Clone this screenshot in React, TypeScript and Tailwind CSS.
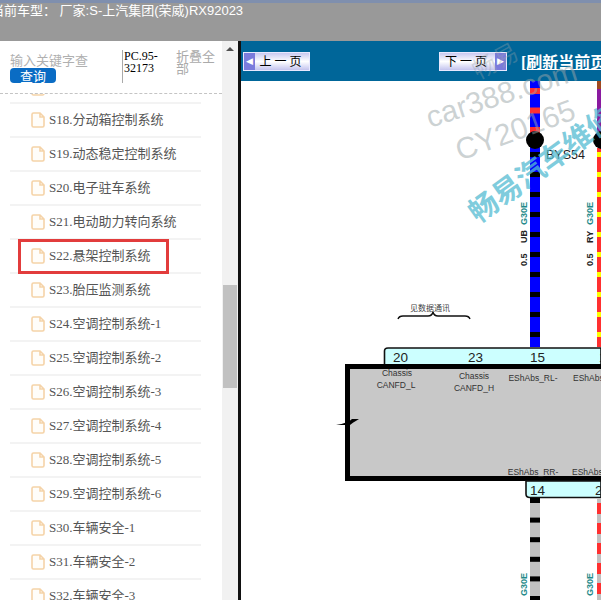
import React from "react";

const rows = [
  "S17.分动箱控制系统",
  "S18.分动箱控制系统",
  "S19.动态稳定控制系统",
  "S20.电子驻车系统",
  "S21.电动助力转向系统",
  "S22.悬架控制系统",
  "S23.胎压监测系统",
  "S24.空调控制系统-1",
  "S25.空调控制系统-2",
  "S26.空调控制系统-3",
  "S27.空调控制系统-4",
  "S28.空调控制系统-5",
  "S29.空调控制系统-6",
  "S30.车辆安全-1",
  "S31.车辆安全-2",
  "S32.车辆安全-3",
];

const CJK = "font-['Liberation_Serif','Noto_Sans_CJK_SC',serif]";

function FileIcon({ shifted }: { shifted?: boolean }) {
  return (
    <svg width="14" height="16" viewBox="0 0 14 16" className={shifted ? "shrink-0 translate-y-[2px]" : "shrink-0"}>
      <path d="M1 2.5 Q1 1 2.5 1 H9 L13 5 V13.5 Q13 15 11.5 15 H2.5 Q1 15 1 13.5 Z M9 1 V5 H13" fill="#fffdf9" stroke="#f5d3a8" strokeWidth="1.6" />
    </svg>
  );
}

function PageButton({ label, dir }: { label: string; dir: "prev" | "next" }) {
  const arrow = (
    <span className="w-[11px] h-full bg-[#7b7bdc] flex items-center justify-center text-white text-[9px] leading-none font-['Liberation_Sans',sans-serif]">
      {dir === "prev" ? "◀" : "▶"}
    </span>
  );
  return (
    <div className="h-[19px] flex items-stretch border border-[#e8e8ff] bg-gradient-to-b from-[#c9c9f0] via-[#ffffff] to-[#c4c4ee] overflow-hidden">
      {dir === "prev" && arrow}
      <span className={`flex-1 flex items-center justify-center text-[12px] text-black tracking-[3px] ${CJK}`}>{label}</span>
      {dir === "next" && arrow}
    </div>
  );
}

function bands(x: number, w: number, y0: number, y1: number, step: number, h: number, color: string) {
  const out: React.ReactNode[] = [];
  for (let y = y0; y < y1; y += step) {
    out.push(<rect key={`${x}-${y}`} x={x} y={y} width={w} height={Math.min(h, y1 - y)} fill={color} />);
  }
  return out;
}

function VLabel({ x, y, text, color, size = 9 }: { x: number; y: number; text: string; color: string; size?: number }) {
  return (
    <text transform={`translate(${x} ${y}) rotate(-90)`} fontFamily="Liberation Sans, sans-serif" fontWeight="700" fontSize={size} fill={color}>
      {text}
    </text>
  );
}

function Diagram() {
  const sans = "Liberation Sans, sans-serif";
  return (
    <svg viewBox="241 81 360 519" width="360" height="519" className="block bg-white overflow-visible">
      {/* top wires */}
      <rect x="530" y="81" width="10" height="266" fill="#0000ff" />
      {bands(530, 10, 88, 135, 19.5, 6, "#ff3030")}
      {bands(530, 10, 152, 347, 20, 5, "#000000")}
      <rect x="597" y="81" width="4" height="60" fill="#8a1aa0" />
      <rect x="597" y="81" width="4" height="8" fill="#a04a20" />
      <rect x="597" y="148" width="4" height="199" fill="#ff3030" />
      {bands(597, 4, 152, 347, 20, 5, "#ffff00")}
      <circle cx="535" cy="140" r="9" fill="#000" />
      <circle cx="602" cy="140" r="9" fill="#000" />
      <text x="546" y="159" fontFamily={sans} fontSize="12.5" fill="#222">BYS54</text>

      <VLabel x={527} y={225} text="G30E" color="#1f8a8a" />
      <VLabel x={527} y={243} text="UB" color="#222" />
      <VLabel x={527} y={266} text="0.5" color="#222" />
      <VLabel x={593} y={225} text="G30E" color="#1f8a8a" />
      <VLabel x={593} y={243} text="RY" color="#222" />
      <VLabel x={593} y={266} text="0.5" color="#222" />

      {/* brace */}
      <text x="410" y="311" fontFamily="Noto Sans CJK SC, sans-serif" fontSize="8" fill="#444">见数据通讯</text>
      <path d="M398 319 Q399 316 403 316 H428 Q432 316 433 312 Q434 316 438 316 H465 Q469 316 470 319" fill="none" stroke="#111" strokeWidth="1.4" />

      {/* connector top */}
      <path d="M384.5 366 V351 Q384.5 348 388 348 H601 V366 Z" fill="#ccffff" stroke="#111" strokeWidth="1.6" />
      <g fontFamily={sans} fontSize="13.5" fill="#222">
        <text x="393" y="362">20</text>
        <text x="468" y="362">23</text>
        <text x="530" y="362">15</text>
        <text x="599" y="362">1</text>
      </g>

      {/* module box */}
      <rect x="347.5" y="366.5" width="270" height="112" fill="#c8c8c8" stroke="#000" strokeWidth="5" />
      <g fontFamily={sans} fontSize="8.5" fill="#333" textAnchor="middle">
        <text x="397" y="376">Chassis</text>
        <text x="396" y="388">CANFD_L</text>
        <text x="474" y="379">Chassis</text>
        <text x="474" y="391">CANFD_H</text>
        <text x="533" y="381">EShAbs_RL-</text>
        <text x="533" y="475">EShAbs_RR-</text>
        <text x="573" y="381" textAnchor="start">EShAbs</text>
        <text x="572" y="475" textAnchor="start">EShAbs</text>
      </g>
      <path d="M336 425 Q348 423 352 419 L359 419 Q352 423 350 425 Z" fill="#000" />

      {/* connector bottom */}
      <path d="M526 481 V494 Q526 497.5 530 497.5 H601 V481 Z" fill="#ccffff" stroke="#111" strokeWidth="1.6" />
      <g fontFamily={sans} fontSize="13.5" fill="#222">
        <text x="530" y="495">14</text>
        <text x="595" y="495">2</text>
      </g>

      {/* bottom wires */}
      <rect x="530" y="499" width="10" height="101" fill="#c0c0c0" />
      {bands(530, 10, 498, 600, 19.6, 5, "#000000")}
      <rect x="597" y="499" width="4" height="101" fill="#c0c0c0" />
      {bands(597, 4, 503, 600, 20, 11, "#ff3030")}
      <VLabel x={527} y={596} text="G30E" color="#1f8a8a" />
      <VLabel x={593} y={596} text="G30E" color="#1f8a8a" />

      {/* watermarks */}
      <g fontFamily={sans}>
        <text transform="translate(430 128) rotate(-18)" fontSize="30" fill="#9aa5a8" fillOpacity="0.5">car388.com</text>
        <text transform="translate(460 161) rotate(-20)" fontSize="30" fill="#9aa5a8" fillOpacity="0.5">CY20165</text>
      </g>
      <text transform="translate(478 224) rotate(-36)" fontFamily="Noto Sans CJK SC, sans-serif" fontWeight="700" fontSize="29" fill="#55bcd2" fillOpacity="0.75">畅易汽车维修</text>
      <text transform="translate(478 80) rotate(-28)" fontFamily="Noto Sans CJK SC, sans-serif" fontSize="24" fill="#9aa5a8" fillOpacity="0.35">畅易</text>
    </svg>
  );
}

export default function App() {
  return (
    <div className="w-[601px] h-[600px] overflow-hidden flex flex-col bg-white">
      <div className="h-[41px] shrink-0 bg-[#999999] border-t-[3px] border-[#7f8fae] overflow-hidden">
        <div className="-ml-[9px] whitespace-nowrap text-white text-[13px] leading-[15px] font-['Liberation_Sans','Noto_Sans_CJK_SC',sans-serif]">
          当前车型： 厂家:S-上汽集团(荣威)RX92023
        </div>
      </div>
      <div className="flex-1 min-h-0 flex">
        <div className="w-[222px] shrink-0 flex flex-col overflow-hidden">
          <div className="h-[53px] shrink-0 border-b border-dashed border-[#c4c4c4] flex items-start pt-[9px] pl-[10px] pr-[3px]">
            <div className="w-[112px] shrink-0">
              <div className="text-[13px] leading-[20px] text-[#b0b0b0] font-['Noto_Sans_CJK_SC',sans-serif]">输入关键字查</div>
              <div className="-mt-[2px] w-[46px] h-[15px] rounded-[4px] bg-[#0a6cc4] text-white text-[13px] leading-[15px] text-center font-['Noto_Sans_CJK_SC',sans-serif]">查询</div>
            </div>
            <div className={`w-[54px] shrink-0 h-[33px] border-l border-[#aaaaaa] pl-[1px] text-[12px] leading-[12px] text-black ${CJK}`}>
              PC.95-<br />32173
            </div>
            <div className="flex-1 text-[13px] leading-[12px] text-[#aaaaaa] font-['Noto_Sans_CJK_SC',sans-serif]">折叠全部</div>
          </div>
          <div className="flex-1 min-h-0 overflow-hidden">
            <div className="-mt-[24px]">
              {rows.map((r, i) => (
                <div key={r} className="relative h-[34px] ml-[10px] w-[191px] border-b-2 border-[#f3f3f3] flex items-center pl-[21px] gap-[4px]">
                  <FileIcon shifted={i === 0} />
                  <span className={`text-[13px] text-[#555555] whitespace-nowrap ${CJK}`}>{r}</span>
                  {r.startsWith("S22") && (
                    <div className="absolute left-[8px] -top-[1px] w-[151px] h-[35px] border-[3px] border-[#e23c3c]" />
                  )}
                </div>
              ))}
            </div>
          </div>
        </div>
        <div className="w-[16px] shrink-0 bg-[#f1f1f1] flex flex-col items-center relative">
          <div className="mt-[6px] w-0 h-0 border-l-[4px] border-r-[4px] border-b-[4px] border-l-transparent border-r-transparent border-b-[#505050]" />
          <div className="mt-[234px] w-[14px] h-[103px] bg-[#c1c1c1]" />
        </div>
        <div className="w-[3px] shrink-0 bg-[#111111]" />
        <div className="flex-1 min-w-0 flex flex-col">
          <div className="h-[40px] shrink-0 bg-[#006699] flex items-start pt-[11px] pl-[2px] whitespace-nowrap">
            <div className="w-[67px] shrink-0"><PageButton label="上一页" dir="prev" /></div>
            <div className="w-[68px] shrink-0 ml-[129px]"><PageButton label="下一页" dir="next" /></div>
            <span className={`ml-[14px] mt-[2px] text-white font-bold underline text-[16px] leading-[18px] ${CJK}`}>[刷新当前页]</span>
          </div>
          <Diagram />
        </div>
      </div>
    </div>
  );
}
